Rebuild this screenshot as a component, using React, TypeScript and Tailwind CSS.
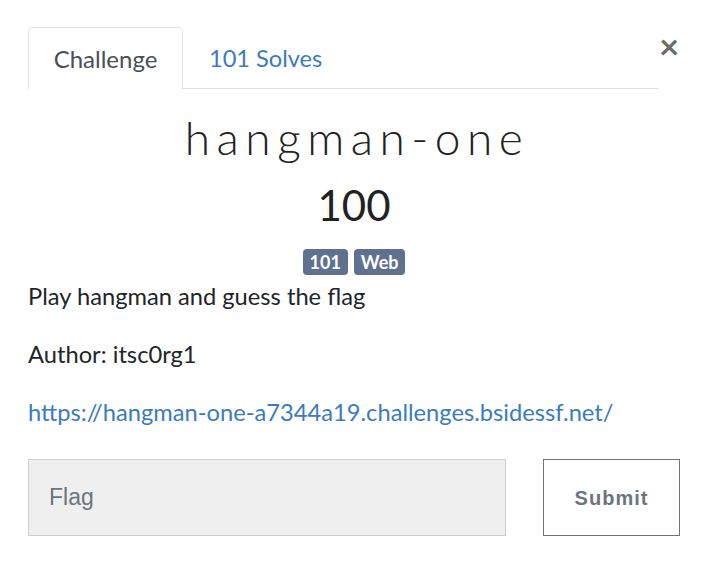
export default function App() {
  return (
    <div className="w-[714px] h-[574px] bg-white relative" style={{ fontFamily: "Lato, 'Noto Sans', sans-serif" }}>
      {/* close */}
      <button className="absolute left-[659px] top-[28px] text-[35px] leading-none font-bold text-[#6c6c6c]">×</button>

      <div className="pl-[28px] pr-[34px] pt-[27px]">
        {/* tabs */}
        <div className="flex border-b border-[#dee2e6] h-[62px] mr-[22px]">
          <div className="w-[155px] border border-b-0 border-[#dee2e6] rounded-t-[5px] bg-white -mb-px flex items-center justify-center text-[24px] text-[#495057]">
            Challenge
          </div>
          <div className="pl-[26px] flex items-center pt-[2px] text-[23.6px] text-[#3b7bbf]">101 Solves</div>
        </div>

        {/* title */}
        <div className="text-center mt-[21px] text-[46px] leading-[56px] font-light tracking-[6.5px] pl-[6px] text-[#222]">hangman-one</div>
        <div className="text-center mt-[14px] text-[42px] leading-[50px] text-[#222]">100</div>
        <div className="flex justify-center gap-[6px] mt-[19px]">
          <span className="bg-[#5f718f] text-white font-bold text-[18px] leading-[26px] px-[7px] rounded-[4px]">101</span>
          <span className="bg-[#5f718f] text-white font-bold text-[18px] leading-[26px] px-[7px] rounded-[4px]">Web</span>
        </div>

        {/* description */}
        <div className="text-[23.7px] text-[#212529] leading-[30px]">
          <p className="mt-[6px]">Play hangman and guess the flag</p>
          <p className="mt-[28px]">Author: itsc0rg1</p>
          <p className="mt-[28px] text-[#3b7bbf]">https://hangman-one-a7344a19.challenges.bsidessf.net/</p>
        </div>
      </div>

      {/* form */}
      <div className="flex pl-[28px] mt-[32px] gap-[37px]">
        <div className="w-[478px] h-[77px] bg-[#efefef] border border-[#ccd0d4] flex items-center pl-[20px] text-[23px] text-[#6c757d]" style={{ fontFamily: "'Liberation Sans', Arial, sans-serif" }}>
          Flag
        </div>
        <button className="w-[137px] h-[77px] border border-[#6c757d] bg-white text-[20px] font-bold tracking-[1px] text-[#6c757d]" style={{ fontFamily: "'Liberation Sans', Arial, sans-serif" }}>
          Submit
        </button>
      </div>
    </div>
  );
}
